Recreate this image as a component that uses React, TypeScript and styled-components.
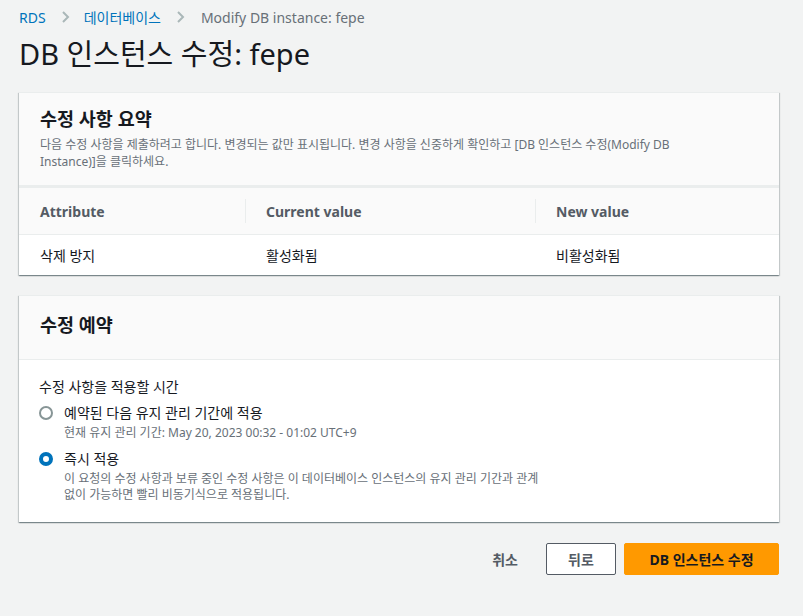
import React from "react";
import styled, { createGlobalStyle } from "styled-components";

const Global = createGlobalStyle`
  html, body { margin: 0; padding: 0; background: #f2f3f3; }
  body {
    font-family: "Noto Sans", "Noto Sans CJK KR", sans-serif;
    color: #16191f;
    -webkit-font-smoothing: antialiased;
    word-break: keep-all;
  }
  * { box-sizing: border-box; }
`;

const Page = styled.div`
  width: 803px;
  min-height: 616px;
  padding: 6px 24px 20px 19px;
`;

const Crumbs = styled.nav`
  display: flex;
  align-items: center;
  gap: 11px;
  height: 22px;
  font-size: 14px;
`;

const CrumbLink = styled.span`
  color: #0073bb;
`;

const CrumbCurrent = styled.span`
  color: #687078;
  margin-left: 2px;
`;

const Chevron = () => (
  <svg width="16" height="16" viewBox="0 0 16 16" fill="none">
    <path d="M6 3l5 5-5 5" stroke="#aab7b8" strokeWidth="2" />
  </svg>
);

const Title = styled.h1`
  margin: 6px 0 0;
  font-size: 29px;
  font-weight: 400;
  line-height: 40px;
`;

const Panel = styled.section<{ $top: number }>`
  margin-top: ${(p) => p.$top}px;
  background: #fff;
  box-shadow: 0 1px 1px 0 rgba(0, 28, 36, 0.3), 1px 1px 1px 0 rgba(0, 28, 36, 0.15),
    -1px 1px 1px 0 rgba(0, 28, 36, 0.15);
  border-top: 1px solid #eaeded;
`;

const PanelHeader = styled.header<{ $thick?: boolean; $pad: string }>`
  background: #fafafa;
  padding: ${(p) => p.$pad};
  border-bottom: ${(p) => (p.$thick ? "3px" : "1px")} solid #eaeded;
`;

const PanelTitle = styled.h2`
  margin: 0;
  font-size: 18.5px;
  font-weight: 700;
  line-height: 24px;
`;

const PanelDesc = styled.p`
  margin: 5px 0 0;
  font-size: 12px;
  line-height: 17px;
  color: #687078;
  max-width: 680px;
`;

const Table = styled.div`
  display: grid;
  grid-template-columns: 226px 290px 1fr;
`;

const HeadCell = styled.div<{ $divider?: boolean }>`
  position: relative;
  background: #fafafa;
  height: 47px;
  display: flex;
  align-items: center;
  padding-left: 21px;
  font-size: 14px;
  font-weight: 700;
  color: #545b64;
  border-bottom: 1px solid #eaeded;
  ${(p) =>
    p.$divider
      ? `&::before { content: ""; position: absolute; left: 0; top: 11px; bottom: 11px; border-left: 1px solid #eaeded; }`
      : ""}
`;

const BodyCell = styled.div`
  height: 40px;
  display: flex;
  align-items: center;
  padding-left: 21px;
  font-size: 14px;
  color: #16191f;
`;

const Body = styled.div`
  padding: 17px 20px 19px;
`;

const FieldLabel = styled.div`
  font-size: 14px;
  line-height: 20px;
`;

const RadioRow = styled.label<{ $gap: number }>`
  display: grid;
  grid-template-columns: 16px 1fr;
  column-gap: 9px;
  margin-top: ${(p) => p.$gap}px;
`;

const RadioDot = styled.span<{ $on?: boolean }>`
  width: 14px;
  height: 14px;
  margin-top: 3px;
  border-radius: 50%;
  border: ${(p) => (p.$on ? "4px solid #0073bb" : "2px solid #879596")};
  background: #fff;
`;

const RadioLabel = styled.div`
  font-size: 14px;
  line-height: 20px;
`;

const RadioDesc = styled.div`
  margin-top: 2px;
  font-size: 12px;
  line-height: 16px;
  color: #687078;
  max-width: 490px;
`;

const Actions = styled.div`
  display: flex;
  justify-content: flex-end;
  align-items: center;
  gap: 8px;
  margin-top: 21px;
`;

const TextButton = styled.button`
  background: none;
  border: none;
  font: inherit;
  font-size: 14px;
  font-weight: 700;
  color: #545b64;
  padding: 0 20px;
  height: 32px;
`;

const Button = styled.button<{ $primary?: boolean }>`
  height: 32px;
  padding: 0 20px;
  border-radius: 2px;
  font: inherit;
  font-size: 14px;
  font-weight: 700;
  ${(p) =>
    p.$primary
      ? `background:#ff9900;border:1px solid #ff9900;color:#16191f;min-width:155px;`
      : `background:#fff;border:1px solid #545b64;color:#545b64;min-width:70px;`}
`;

export default function App() {
  return (
    <Page>
      <Global />
      <Crumbs>
        <CrumbLink>RDS</CrumbLink>
        <Chevron />
        <CrumbLink>데이터베이스</CrumbLink>
        <Chevron />
        <CrumbCurrent>Modify DB instance: fepe</CrumbCurrent>
      </Crumbs>
      <Title>DB 인스턴스 수정: fepe</Title>

      <Panel $top={18}>
        <PanelHeader $thick $pad="14px 20px 15px 21px">
          <PanelTitle>수정 사항 요약</PanelTitle>
          <PanelDesc>
            다음 수정 사항을 제출하려고 합니다. 변경되는 값만 표시됩니다. 변경 사항을 신중하게 확인하고 [DB 인스턴스
            수정(Modify DB Instance)]을 클릭하세요.
          </PanelDesc>
        </PanelHeader>
        <Table>
          <HeadCell>Attribute</HeadCell>
          <HeadCell $divider>Current value</HeadCell>
          <HeadCell $divider>New value</HeadCell>
          <BodyCell>삭제 방지</BodyCell>
          <BodyCell>활성화됨</BodyCell>
          <BodyCell>비활성화됨</BodyCell>
        </Table>
      </Panel>

      <Panel $top={20}>
        <PanelHeader $pad="17px 20px 22px 21px">
          <PanelTitle>수정 예약</PanelTitle>
        </PanelHeader>
        <Body>
          <FieldLabel>수정 사항을 적용할 시간</FieldLabel>
          <RadioRow $gap={6}>
            <RadioDot />
            <RadioLabel>예약된 다음 유지 관리 기간에 적용</RadioLabel>
            <span />
            <RadioDesc>현재 유지 관리 기간: May 20, 2023 00:32 - 01:02 UTC+9</RadioDesc>
          </RadioRow>
          <RadioRow $gap={8}>
            <RadioDot $on />
            <RadioLabel>즉시 적용</RadioLabel>
            <span />
            <RadioDesc>
              이 요청의 수정 사항과 보류 중인 수정 사항은 이 데이터베이스 인스턴스의 유지 관리 기간과 관계 없이
              가능하면 빨리 비동기식으로 적용됩니다.
            </RadioDesc>
          </RadioRow>
        </Body>
      </Panel>

      <Actions>
        <TextButton>취소</TextButton>
        <Button>뒤로</Button>
        <Button $primary>DB 인스턴스 수정</Button>
      </Actions>
    </Page>
  );
}
